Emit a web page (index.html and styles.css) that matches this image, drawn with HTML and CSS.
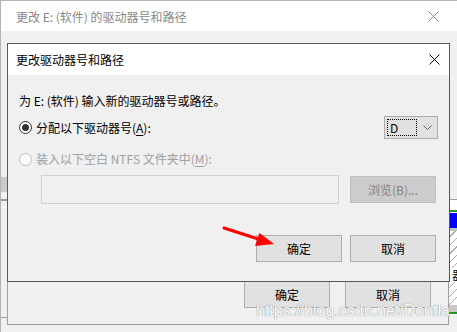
FILE: index.html
```html
<!DOCTYPE html>
<html lang="zh-CN">

<head>
    <meta charset="UTF-8">
    <meta name="viewport" content="width=device-width, initial-scale=1.0">
    <title>更改驱动器号和路径</title>
    <link rel="stylesheet" href="styles.css">
</head>

<body>
    <div class="desk">

        <!-- 뒤쪽 창 -->
        <div class="win back">
            <div class="titlebar">
                <span class="title">更改 E: (软件) 的驱动器号和路径</span>
                <svg class="close" width="11" height="11" viewBox="0 0 11 11">
                    <path d="M0.5 0.5 L10.5 10.5 M10.5 0.5 L0.5 10.5" stroke="#8a8a8a" stroke-width="1" fill="none" />
                </svg>
            </div>
            <div class="back-body">
                <div class="col-left">
                    <div class="band"></div>
                    <div class="hl white"></div>
                    <div class="hl dark"></div>
                    <div class="hl white low"></div>
                    <div class="hl edge"></div>
                </div>
                <div class="col-mid">
                    <div class="frame">
                        <div class="back-btns">
                            <button class="btn">确定</button>
                            <button class="btn">取消</button>
                        </div>
                    </div>
                </div>
                <div class="col-right">
                    <div class="hl edge"></div>
                    <div class="gap-white"></div>
                    <div class="green"></div>
                    <div class="blue"></div>
                    <div class="grey3"></div>
                    <div class="hatch"><span class="frag">器</span></div>
                    <div class="grey6"></div>
                    <div class="green"></div>
                </div>
            </div>
        </div>

        <!-- 앞쪽 대화상자 -->
        <div class="win front">
            <div class="titlebar">
                <span class="title">更改驱动器号和路径</span>
                <svg class="close" width="11" height="11" viewBox="0 0 11 11">
                    <path d="M0.5 0.5 L10.5 10.5 M10.5 0.5 L0.5 10.5" stroke="#000" stroke-width="1" fill="none" />
                </svg>
            </div>
            <div class="body">
                <div class="intro">为 E: (软件) 输入新的驱动器号或路径。</div>

                <div class="row first">
                    <label class="opt">
                        <span class="radio on"></span>
                        <span>分配以下驱动器号(<u>A</u>):</span>
                    </label>
                    <div class="combo">
                        <span class="focus">D</span>
                        <svg class="chev" width="9" height="5" viewBox="0 0 9 5">
                            <path d="M0.5 0.5 L4.5 4.5 L8.5 0.5" stroke="#606060" stroke-width="1" fill="none" />
                        </svg>
                    </div>
                </div>

                <label class="opt off">
                    <span class="radio"></span>
                    <span>装入以下空白 NTFS 文件夹中(<u>M</u>):</span>
                </label>

                <div class="folder">
                    <div class="path"></div>
                    <button class="btn dim">浏览(B)...</button>
                </div>

                <div class="actions">
                    <button class="btn">确定</button>
                    <button class="btn">取消</button>
                </div>
            </div>
        </div>

        <svg class="arrow" width="60" height="26" viewBox="0 0 60 26">
            <path d="M6 4 L45 16.5" stroke="#ff0000" stroke-width="3" stroke-linecap="round" fill="none" />
            <polygon points="56,20 41.5,9 37,22" fill="#ff0000" />
        </svg>

        <div class="mark">https://blog.csdn.net/Dontla</div>
    </div>
</body>

</html>
```

FILE: styles.css
```css
/* reset */
html,
body {
    margin: 0;
    padding: 0;
}

body {
    width: 457px;
    height: 332px;
    overflow: hidden;
    background: #f0f0f0;
    font-family: "Noto Sans CJK SC", "Liberation Sans", sans-serif;
    font-size: 12px;
    color: #000;
}

button {
    margin: 0;
    padding: 0;
    font-family: inherit;
    font-size: 12px;
}

u {
    text-decoration-thickness: 1px;
    text-underline-offset: 2px;
}

/* desktop */
.desk {
    position: relative;
    width: 457px;
    height: 332px;
    overflow: hidden;
}

.win {
    position: absolute;
    box-sizing: border-box;
    background: #f0f0f0;
}

.titlebar {
    display: flex;
    align-items: center;
    justify-content: space-between;
    background: #fff;
}

.close {
    display: block;
}

.btn {
    box-sizing: border-box;
    width: 86px;
    height: 27px;
    background: #e1e1e1;
    border: 1px solid #adadad;
    color: #000;
    line-height: 25px;
}

/* back window */
.back {
    left: 0;
    top: 0;
    width: 457px;
    height: 332px;
    border-left: 1px solid #b4b4b4;
    border-top: 1px solid #b4b4b4;
}

.back .titlebar {
    height: 30px;
    padding: 0 18px 0 15px;
    color: #888;
}

.back-body {
    display: flex;
}

.col-left {
    width: 6px;
    padding-top: 146px;
}

.col-left .band {
    height: 15px;
    background: #cbcbcb;
}

.hl {
    height: 1px;
}

.hl.white {
    margin-top: 3px;
    background: #fff;
}

.hl.dark {
    margin-top: 3px;
    height: 2px;
    background: #9c9c9c;
}

.hl.white.low {
    margin-top: 6px;
}

.col-left .hl.edge {
    margin-top: 109px;
}

.hl.edge {
    background: #a0a0a0;
}

.col-mid {
    width: 442px;
    padding-top: 169px;
}

.frame {
    box-sizing: border-box;
    height: 125px;
    padding-top: 81px;
    border: 1px solid #a0a0a0;
    border-top: 0;
}

.back-btns {
    display: flex;
    justify-content: flex-end;
    gap: 15px;
    padding-right: 17px;
}

.col-right {
    width: 8px;
    padding-top: 168px;
}

.gap-white {
    height: 10px;
    background: #fff;
}

.green {
    height: 2px;
    background: #1d9a1d;
    border-bottom: 1px solid #fff;
}

.blue {
    height: 15px;
    background: #0000ff;
}

.grey3 {
    height: 3px;
    background: #c0c0c0;
}

.hatch {
    box-sizing: border-box;
    height: 74px;
    padding-top: 37px;
    background: repeating-linear-gradient(-45deg, #fff 0 5px, #a8a8a8 5px 6px);
    line-height: 14px;
}

.frag {
    display: inline-block;
    padding-left: 2px;
    border-left: 1px solid #1e6fd8;
    background: #fff;
}

.grey6 {
    height: 7px;
    background: #c8c8c8;
}

/* front dialog */
.front {
    left: 7px;
    top: 43px;
    width: 443px;
    height: 239px;
    border: 1px solid #595959;
}

.front .titlebar {
    height: 31px;
    padding: 0 9px 0 8px;
}

.body {
    display: flex;
    flex-direction: column;
    padding: 18px 11px 0 11px;
}

.intro {
    height: 16px;
    line-height: 16px;
}

.row {
    display: flex;
    align-items: center;
    justify-content: space-between;
}

.row.first {
    margin-top: 7px;
    height: 23px;
}

.opt {
    display: flex;
    align-items: center;
    gap: 4px;
    height: 16px;
    line-height: 16px;
}

.opt.off {
    margin-top: 12px;
    color: #a0a0a0;
}

.radio {
    box-sizing: border-box;
    width: 13px;
    height: 13px;
    border: 1px solid #333;
    border-radius: 50%;
    background: #fff;
    position: relative;
}

.radio.on::after {
    content: "";
    position: absolute;
    left: 2px;
    top: 2px;
    width: 7px;
    height: 7px;
    border-radius: 50%;
    background: #333;
}

.opt.off .radio {
    border-color: #bcbcbc;
    background: #fbfbfb;
}

.combo {
    box-sizing: border-box;
    display: flex;
    align-items: center;
    width: 54px;
    height: 23px;
    padding: 2px;
    background: #e1e1e1;
    border: 1px solid #adadad;
}

.focus {
    box-sizing: border-box;
    width: 30px;
    height: 17px;
    padding-left: 2px;
    line-height: 15px;
    border: 1px dotted #000;
}

.chev {
    display: block;
    margin-left: 6px;
}

.folder {
    display: flex;
    align-items: center;
    gap: 11px;
    margin: 8px 0 0 22px;
    height: 29px;
}

.path {
    box-sizing: border-box;
    width: 298px;
    height: 29px;
    border: 1px solid #d0d0d0;
    background: #f0f0f0;
}

.btn.dim {
    background: #cccccc;
    border-color: #bfbfbf;
    color: #838383;
}

.actions {
    display: flex;
    justify-content: flex-end;
    gap: 8px;
    margin-top: 31px;
    padding-right: 2px;
}

/* overlay */
.arrow {
    position: absolute;
    left: 218px;
    top: 224px;
}

.mark {
    position: absolute;
    left: 256px;
    top: 302px;
    font-family: "Liberation Sans", Arial, sans-serif;
    font-size: 16px;
    line-height: 18px;
    color: #fff;
    opacity: 0.9;
    text-shadow: 0 0 1px #8c8c8c, 0 0 1px #8c8c8c;
    white-space: nowrap;
}
```
